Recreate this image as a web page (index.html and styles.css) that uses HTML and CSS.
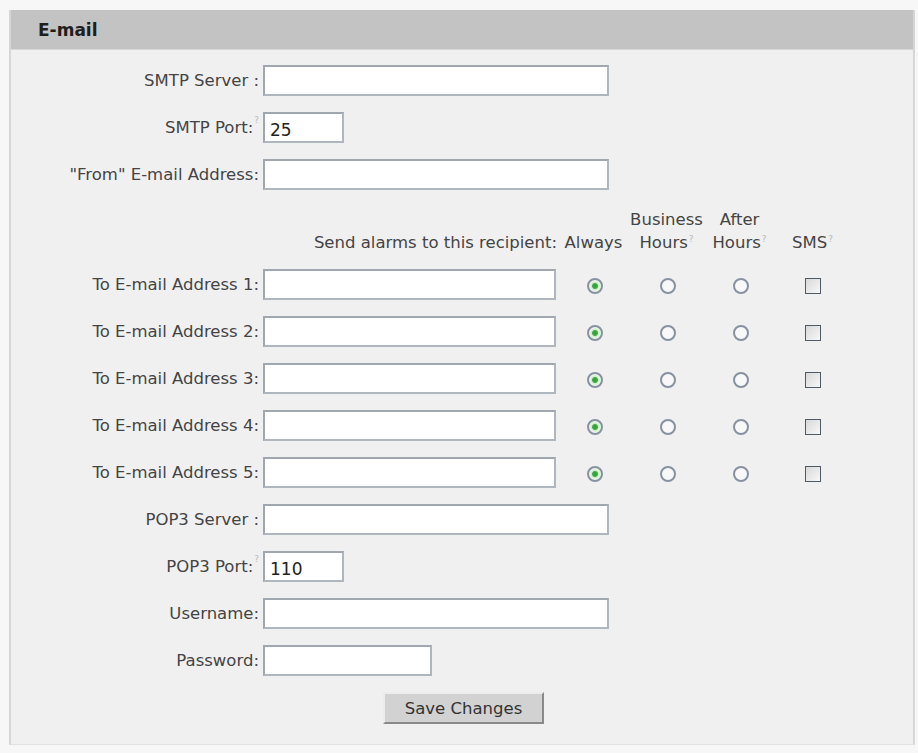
FILE: index.html
```html
<!DOCTYPE html>
<html lang="en">
<head>
    <meta charset="UTF-8">
    <title>E-mail Settings</title>
    <link rel="stylesheet" href="styles.css">
</head>

<body>
    <div class="panel">
        <div class="panel-title">E-mail</div>

        <form class="panel-body">
            <table class="settings">
                <colgroup>
                    <col class="col-label">
                    <col class="col-field">
                    <col class="col-opt">
                    <col class="col-opt">
                    <col class="col-opt">
                    <col class="col-opt">
                </colgroup>

                <tr>
                    <td class="label">SMTP Server :</td>
                    <td colspan="5"><input type="text" class="text wide"></td>
                </tr>
                <tr>
                    <td class="label">SMTP Port:<sup class="hint">?</sup></td>
                    <td colspan="5"><input type="text" class="text short" value="25"></td>
                </tr>
                <tr>
                    <td class="label">"From" E-mail Address:</td>
                    <td colspan="5"><input type="text" class="text wide"></td>
                </tr>

                <!-- заголовки колонок для получателей -->
                <tr class="head-row">
                    <td></td>
                    <td class="send-to">Send alarms to this recipient:</td>
                    <td class="opt-head">Always</td>
                    <td class="opt-head">Business<br>Hours<sup class="hint">?</sup></td>
                    <td class="opt-head">After<br>Hours<sup class="hint">?</sup></td>
                    <td class="opt-head">SMS<sup class="hint">?</sup></td>
                </tr>

                <tr>
                    <td class="label">To E-mail Address 1:</td>
                    <td><input type="text" class="text mid"></td>
                    <td class="opt"><input type="radio" name="when1" checked></td>
                    <td class="opt"><input type="radio" name="when1"></td>
                    <td class="opt"><input type="radio" name="when1"></td>
                    <td class="opt"><input type="checkbox"></td>
                </tr>
                <tr>
                    <td class="label">To E-mail Address 2:</td>
                    <td><input type="text" class="text mid"></td>
                    <td class="opt"><input type="radio" name="when2" checked></td>
                    <td class="opt"><input type="radio" name="when2"></td>
                    <td class="opt"><input type="radio" name="when2"></td>
                    <td class="opt"><input type="checkbox"></td>
                </tr>
                <tr>
                    <td class="label">To E-mail Address 3:</td>
                    <td><input type="text" class="text mid"></td>
                    <td class="opt"><input type="radio" name="when3" checked></td>
                    <td class="opt"><input type="radio" name="when3"></td>
                    <td class="opt"><input type="radio" name="when3"></td>
                    <td class="opt"><input type="checkbox"></td>
                </tr>
                <tr>
                    <td class="label">To E-mail Address 4:</td>
                    <td><input type="text" class="text mid"></td>
                    <td class="opt"><input type="radio" name="when4" checked></td>
                    <td class="opt"><input type="radio" name="when4"></td>
                    <td class="opt"><input type="radio" name="when4"></td>
                    <td class="opt"><input type="checkbox"></td>
                </tr>
                <tr>
                    <td class="label">To E-mail Address 5:</td>
                    <td><input type="text" class="text mid"></td>
                    <td class="opt"><input type="radio" name="when5" checked></td>
                    <td class="opt"><input type="radio" name="when5"></td>
                    <td class="opt"><input type="radio" name="when5"></td>
                    <td class="opt"><input type="checkbox"></td>
                </tr>

                <tr>
                    <td class="label">POP3 Server :</td>
                    <td colspan="5"><input type="text" class="text wide"></td>
                </tr>
                <tr>
                    <td class="label">POP3 Port:<sup class="hint">?</sup></td>
                    <td colspan="5"><input type="text" class="text short" value="110"></td>
                </tr>
                <tr>
                    <td class="label">Username:</td>
                    <td colspan="5"><input type="text" class="text wide"></td>
                </tr>
                <tr>
                    <td class="label">Password:</td>
                    <td colspan="5"><input type="password" class="text pass"></td>
                </tr>
            </table>

            <div class="actions">
                <button type="button" class="save-button">Save Changes</button>
            </div>
        </form>
    </div>
</body>
</html>
```

FILE: styles.css
```css
body {
    font-family: "DejaVu Sans", sans-serif;
    font-size: 16.5px;
    color: #444;
    background-color: #f7f7f7;
    margin: 0;
    padding: 10px 3px 0 9px;
}

.panel {
    background-color: #f0f0f0;
    border-left: 2px solid #d6d6d6;
    border-right: 2px solid #d6d6d6;
    border-bottom: 1px solid #e2e2e2;
    height: 735px;
    box-sizing: border-box;
}

.panel-title {
    background-color: #c3c3c3;
    height: 40px;
    line-height: 40px;
    padding-left: 27px;
    font-weight: bold;
    font-size: 17px;
    color: #1e1e1e;
    border-bottom: 1px solid #d8d8d8;
    box-sizing: border-box;
}

.panel-body {
    padding-top: 7px;
}

.settings {
    border-collapse: collapse;
    table-layout: fixed;
    width: 838px;
}

.col-label {
    width: 252px;
}

.col-field {
    width: 294px;
}

.col-opt {
    width: 73px;
}

.settings td {
    height: 47px;
    padding: 0;
    vertical-align: middle;
    white-space: nowrap;
}

.settings td.label {
    text-align: right;
    padding-right: 4px;
}

.hint {
    font-size: 9px;
    color: #b8b8b8;
    vertical-align: top;
    position: relative;
    top: -3px;
    margin-left: 1px;
}

.head-row td {
    height: 56px;
    vertical-align: bottom;
    padding-bottom: 7px;
    line-height: 23px;
}

.settings td.send-to {
    text-align: right;
    padding-right: 0;
}

.opt-head {
    text-align: center;
}

.opt {
    text-align: center;
}

/* текстовые поля */
.text {
    box-sizing: border-box;
    height: 31px;
    border: 2px solid #b0b6bd;
    border-top-color: #a0a7af;
    border-left-color: #a0a7af;
    background: #fff;
    font-family: inherit;
    font-size: 17px;
    color: #222;
    padding: 4px 5px 0;
    margin: 0;
    vertical-align: middle;
}

.text.wide {
    width: 346px;
}

.text.mid {
    width: 293px;
}

.text.short {
    width: 81px;
}

.text.pass {
    width: 169px;
}

/* радиокнопки и флажки */
input[type="radio"] {
    appearance: none;
    width: 16px;
    height: 16px;
    margin: 0;
    border: 2px solid #8791a0;
    border-radius: 50%;
    background: #f8f8f8;
    box-sizing: border-box;
    vertical-align: middle;
    position: relative;
    left: 1px;
}

input[type="radio"]:checked {
    background: radial-gradient(circle, #2f9a3a 0, #3fae46 2.5px, #cfeccd 3.5px, #f4fbf3 6px);
}

input[type="checkbox"] {
    appearance: none;
    width: 16px;
    height: 16px;
    margin: 0;
    border: 1.5px solid #4e5a66;
    background: linear-gradient(135deg, #d8d8d8, #f8f8f8);
    box-sizing: border-box;
    vertical-align: middle;
}

.actions {
    padding-top: 8px;
    padding-left: 372px;
}

.save-button {
    width: 161px;
    height: 32px;
    font-family: inherit;
    font-size: 16.5px;
    color: #333;
    background-color: #d2d2d2;
    border: 2px solid;
    border-color: #ececec #8a8a8a #8a8a8a #ececec;
    cursor: pointer;
}
```
